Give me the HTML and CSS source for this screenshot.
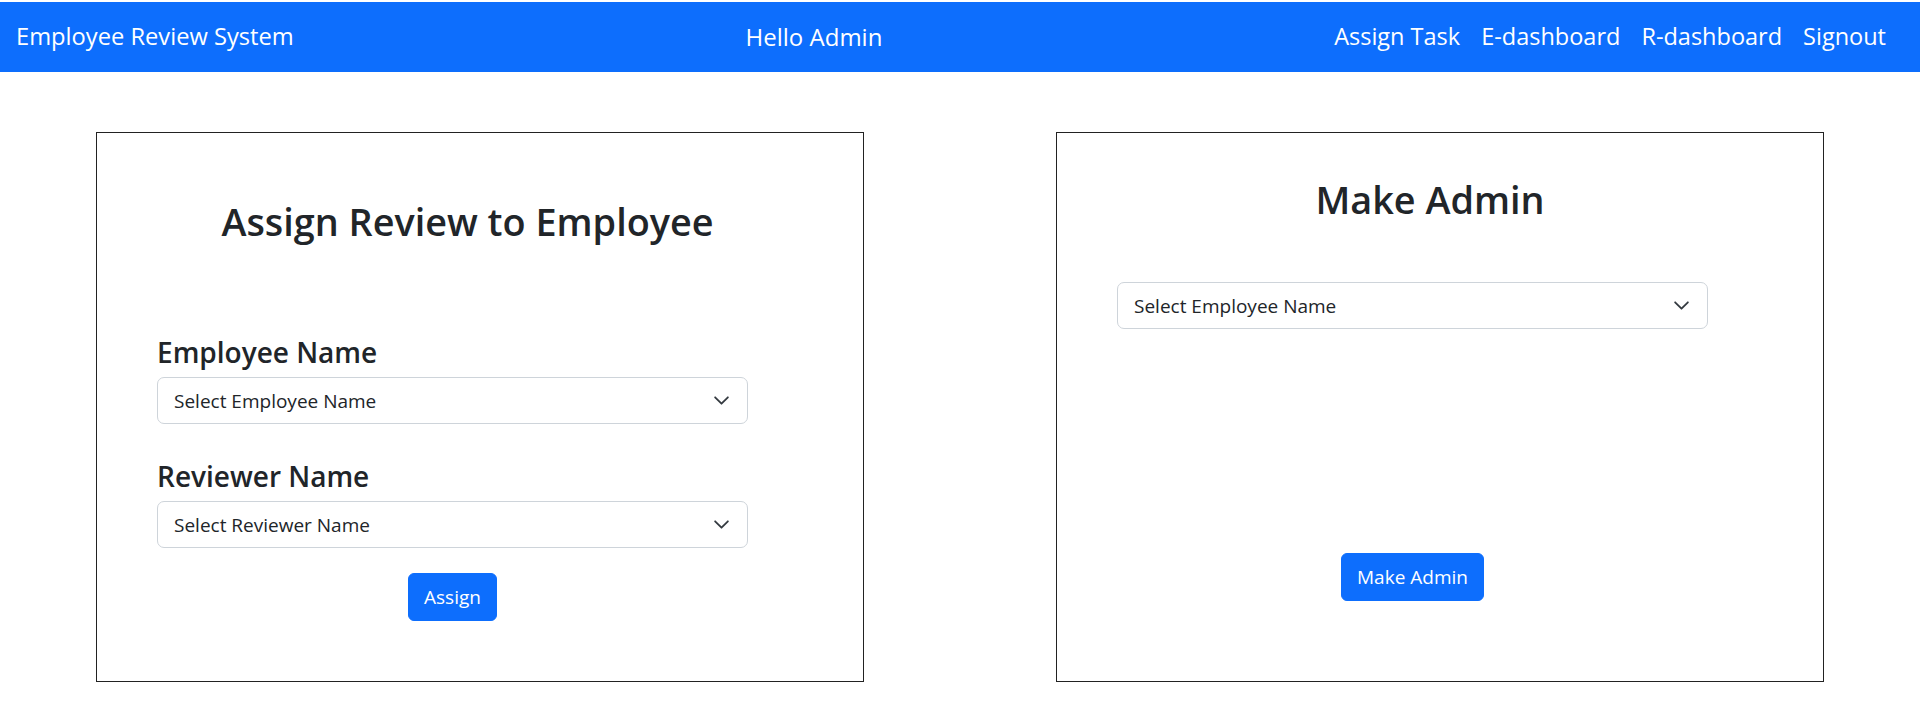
FILE: index.html
```html
<!DOCTYPE html>
<html lang="en">
<head>
<meta charset="utf-8">
<title>Employee Review System</title>
<link rel="stylesheet" href="styles.css">
</head>
<body>
<nav class="navbar">
  <a class="brand" href="#">Employee Review System</a>
  <span class="greeting">Hello Admin</span>
  <ul class="nav-links">
    <li><a href="#">Assign Task</a></li>
    <li><a href="#">E-dashboard</a></li>
    <li><a href="#">R-dashboard</a></li>
    <li><a href="#">Signout</a></li>
  </ul>
</nav>
<main class="panels">
  <section class="panel">
    <div class="card card-assign">
      <h2 class="card-title title-assign">Assign Review to Employee</h2>
      <form class="form">
        <h4 class="label label-first">Employee Name</h4>
        <div class="select">
          <span>Select Employee Name</span>
          <svg class="chev" viewBox="0 0 16 16"><path d="M2 5l6 6 6-6" fill="none" stroke="#343a40" stroke-width="2" stroke-linecap="round" stroke-linejoin="round"/></svg>
        </div>
        <h4 class="label label-second">Reviewer Name</h4>
        <div class="select">
          <span>Select Reviewer Name</span>
          <svg class="chev" viewBox="0 0 16 16"><path d="M2 5l6 6 6-6" fill="none" stroke="#343a40" stroke-width="2" stroke-linecap="round" stroke-linejoin="round"/></svg>
        </div>
        <div class="btn-row btn-row-assign">
          <button type="button" class="btn">Assign</button>
        </div>
      </form>
    </div>
  </section>
  <section class="panel">
    <div class="card card-admin">
      <h2 class="card-title title-admin">Make Admin</h2>
      <form class="form">
        <div class="select select-admin">
          <span>Select Employee Name</span>
          <svg class="chev" viewBox="0 0 16 16"><path d="M2 5l6 6 6-6" fill="none" stroke="#343a40" stroke-width="2" stroke-linecap="round" stroke-linejoin="round"/></svg>
        </div>
        <div class="btn-row btn-row-admin">
          <button type="button" class="btn">Make Admin</button>
        </div>
      </form>
    </div>
  </section>
</main>
</body>
</html>
```

FILE: styles.css
```css
* { box-sizing: border-box; }

html, body {
  margin: 0;
  padding: 0;
  background: #fff;
}

body {
  font-family: "Open Sans", "Noto Sans", sans-serif;
  color: #212529;
  padding-top: 2px;
}

/* Navbar */
.navbar {
  height: 70px;
  background: #0d6efd;
  display: flex;
  align-items: center;
  justify-content: space-between;
  padding: 0 34px 0 16px;
}

.brand,
.greeting,
.nav-links a {
  color: #fff;
  text-decoration: none;
  font-size: 23.7px;
  line-height: 1.5;
  white-space: nowrap;
}

.greeting {
  font-size: 24px;
}

.nav-links {
  list-style: none;
  margin: 0;
  padding: 0;
  display: flex;
  gap: 21px;
}

.nav-links a {
  font-size: 23.5px;
}

/* Panels */
.panels {
  display: grid;
  grid-template-columns: 1fr 1fr;
  padding-top: 60px;
}

.panel {
  display: flex;
  justify-content: center;
}

.card {
  width: 768px;
  height: 550px;
  border: 1px solid #222;
  padding-left: 60px;
}

.card-title {
  margin: 0;
  font-size: 37.8px;
  font-weight: 600;
  line-height: 46px;
  text-align: center;
  color: #212529;
}

.title-assign {
  margin-top: 66px;
  padding-right: 85px;
}

.title-admin {
  margin-top: 44px;
  padding-right: 80px;
}

.form {
  width: 591px;
  margin: 0;
}

.label {
  margin: 0 0 8px;
  font-size: 28px;
  font-weight: 600;
  line-height: 34px;
  color: #212529;
}

.label-first { margin-top: 90px; }
.label-second { margin-top: 35px; }

.select {
  height: 47px;
  border: 1px solid #ced4da;
  border-radius: 7px;
  display: flex;
  align-items: center;
  justify-content: space-between;
  padding: 0 17px 0 16px;
  font-size: 19px;
  color: #212529;
  background: #fff;
}

.select-admin { margin-top: 59px; }

.chev {
  display: block;
  width: 17px;
  height: 17px;
}

.chev path {
  stroke-width: 1.7;
}

.btn-row {
  display: flex;
  justify-content: center;
}

.btn-row-assign { margin-top: 25px; }
.btn-row-admin { margin-top: 224px; }

.btn {
  font-family: inherit;
  font-size: 19px;
  line-height: 30px;
  height: 48px;
  padding: 0 15px;
  border: 1px solid #0d6efd;
  border-radius: 6px;
  background: #0d6efd;
  color: #fff;
  cursor: pointer;
}
```
